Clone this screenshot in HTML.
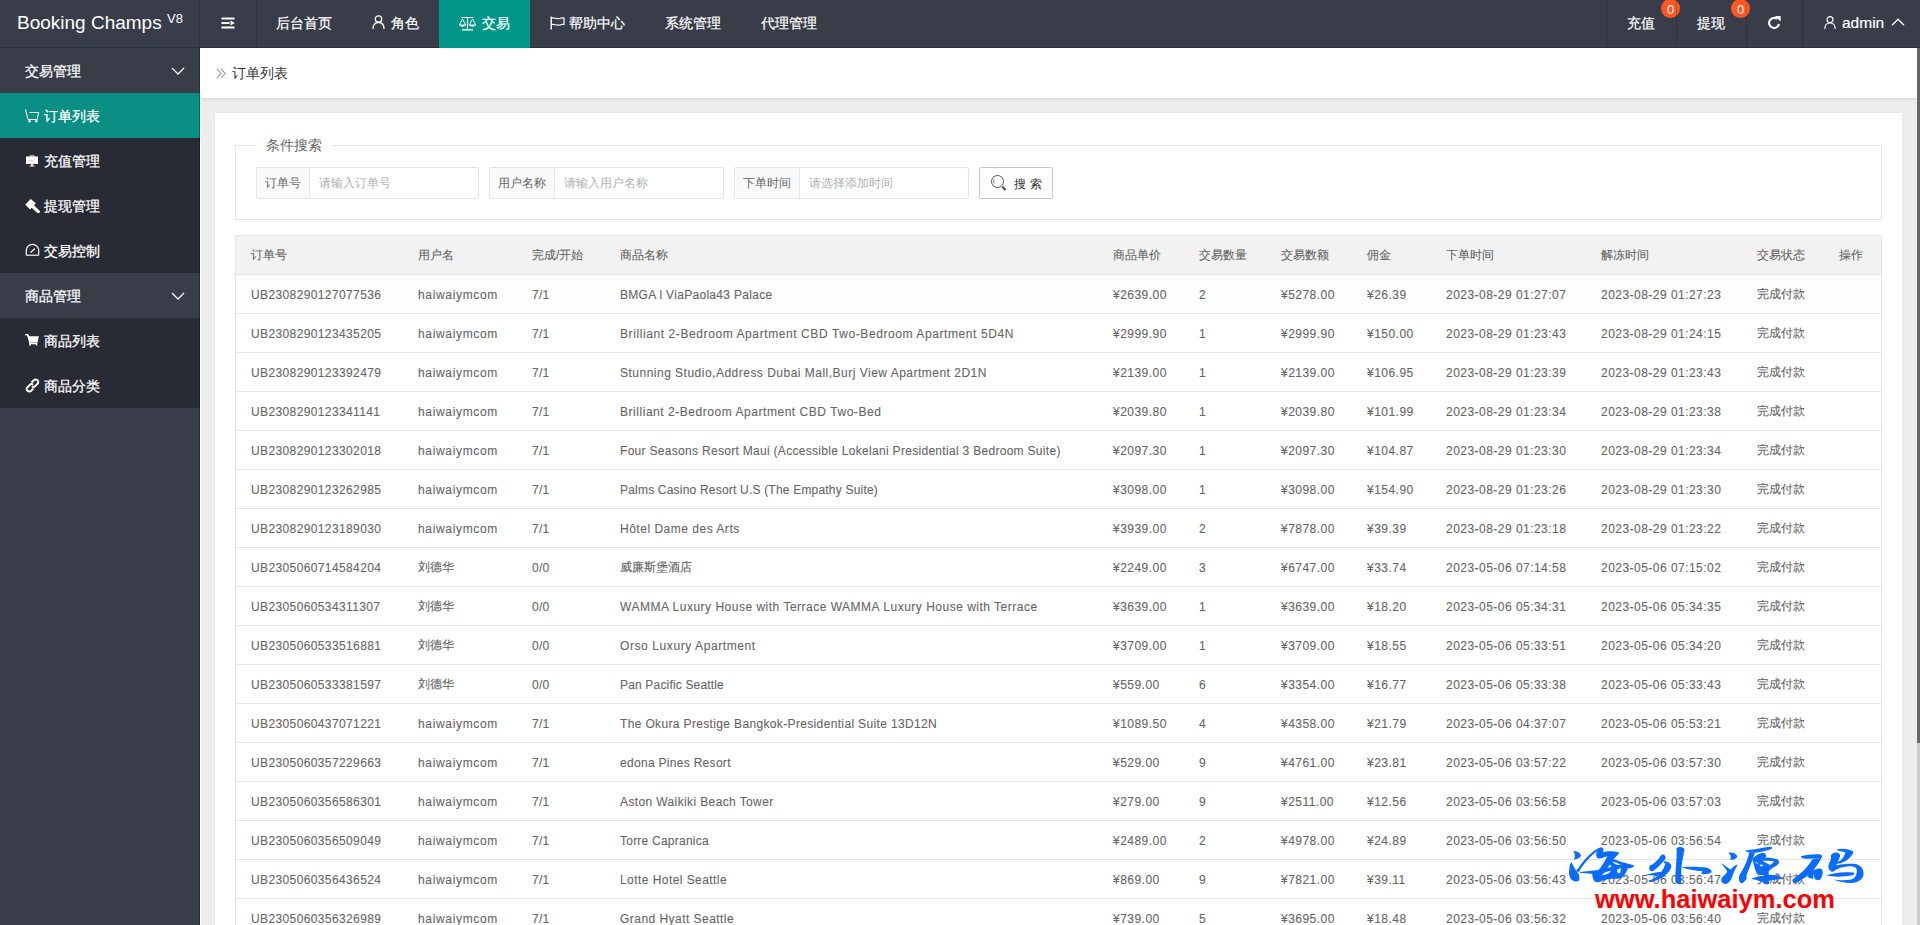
<!DOCTYPE html>
<html><head><meta charset="utf-8">
<style>
*{margin:0;padding:0;box-sizing:border-box}
html,body{width:1920px;height:925px;overflow:hidden;background:#ededed;font-family:"Liberation Sans",sans-serif;font-size:14px;color:#666}
.abs{position:absolute}
#hdr{position:absolute;left:0;top:0;width:1920px;height:48px;background:#393D49}
#hdr .t{position:absolute;color:#fff;font-size:14px;line-height:16px;top:15px;white-space:nowrap;-webkit-text-stroke:0.2px #fff}
.vd{position:absolute;top:0;width:1px;height:47px;background:rgba(0,0,0,.16);z-index:2}
#side{position:absolute;left:0;top:48px;width:200px;height:877px;background:#393D49}
.si{position:absolute;left:0;width:200px;height:45px;color:#fff;font-size:14px;line-height:45px}
.si.sub{background:#282B33}
.si.act{background:#098f83}
.si span{position:absolute;top:1px;-webkit-text-stroke:0.25px #fff}
#body{position:absolute;left:200px;top:48px;width:1717px;height:877px;background:#ededed;overflow:hidden;border-left:1px solid #fafafa}
#crumb{position:absolute;left:-1px;top:0;width:1717px;height:50px;background:#fff;box-shadow:0 1px 4px rgba(0,0,0,.12)}
#card{position:absolute;left:14px;top:65px;width:1687px;height:900px;background:#fff;box-shadow:0 0 2px rgba(0,0,0,.06)}
#fs{position:absolute;left:20px;top:32px;width:1647px;height:75px;border:1px solid #e6e6e6}
#lg{position:absolute;left:20px;top:-11px;padding:0 10px;background:#fff;color:#666;font-size:14px;line-height:20px}
.ig{position:absolute;top:21px;height:32px;border:1px solid #e6e6e6;border-radius:2px;background:#fff}
.ig .lb{position:absolute;left:0;top:0;height:30px;background:#fafafa;border-right:1px solid #e6e6e6;color:#666;font-size:12px;line-height:30px;text-align:center}
.ig .ph{position:absolute;top:0;color:#b0b0b0;font-size:12px;line-height:30px}
#btn{position:absolute;left:743px;top:21px;width:74px;height:32px;border:1px solid #c9c9c9;border-radius:2px;background:#fff}
#tbl{position:absolute;left:20px;top:122px;width:1647px;height:800px;border:1px solid #e6e6e6;border-bottom:none}
.tr{position:absolute;left:0;width:1645px;height:39px;border-bottom:1px solid #e6e6e6;background:#fff}
.tr.th{background:#f2f2f2}
.tr.r1{background:#fdfdfd}
.c{position:absolute;top:0;line-height:38px;font-size:12px;color:#666;white-space:nowrap;-webkit-text-stroke:0.1px #666}
.c.l{letter-spacing:.3px;top:1px}
#sb{position:absolute;left:1917px;top:48px;width:3px;height:877px;background:#ccc}
#sbt{position:absolute;left:1917px;top:48px;width:3px;height:695px;background:#666}
</style></head><body>
<div id="hdr">
  <div class="t" style="left:17px;top:12px;font-size:19px;line-height:22px;-webkit-text-stroke:0">Booking Champs <sup style="font-size:13px;vertical-align:0;position:relative;top:-6.5px">V8</sup></div>
  <div class="vd" style="left:199px"></div><div class="abs" style="left:0;top:47px;width:1920px;height:1px;background:#2e313b"></div>
  <div class="vd" style="left:256px"></div>
  <!-- shrink icon -->
  <svg class="abs" style="left:221px;top:17px" width="15" height="12" viewBox="0 0 15 12"><rect x="0.5" y="0.5" width="13" height="2" fill="#fff"/><rect x="0.5" y="5" width="8" height="2" fill="#fff"/><path d="M9.5 3.5 L13.8 6 L9.5 8.5Z" fill="#fff"/><rect x="0.5" y="9.5" width="13" height="2" fill="#fff"/></svg>
  <div class="t" style="left:276px">后台首页</div>
  <!-- user icon -->
  <svg class="abs" style="left:372px;top:15px" width="13" height="14" viewBox="0 0 13 14"><circle cx="6.5" cy="4" r="3.2" fill="none" stroke="#fff" stroke-width="1.3"/><path d="M1 14 C1 9.5 3.5 7.5 6.5 7.5 C9.5 7.5 12 9.5 12 14" fill="none" stroke="#fff" stroke-width="1.3"/></svg>
  <div class="t" style="left:391px">角色</div>
  <div class="abs" style="left:439px;top:0;width:91px;height:48px;background:#009688"></div>
  <!-- balance icon -->
  <svg class="abs" style="left:458px;top:16px" width="19" height="15" viewBox="0 0 19 15"><path d="M3.5 1.5 H15.5 M9.5 1 V13.5 M4 13.8 H15" stroke="#fff" stroke-width="1.2" fill="none"/><path d="M4.5 3 L1.3 9 H7.7 Z M14.5 3 L11.3 9 H17.7 Z" stroke="#fff" stroke-width="0.9" fill="none"/><path d="M1 9 Q4.5 12.5 8 9 Z M11 9 Q14.5 12.5 18 9 Z" fill="#fff"/></svg>
  <div class="t" style="left:482px">交易</div>
  <!-- flag icon -->
  <svg class="abs" style="left:550px;top:16px" width="15" height="14" viewBox="0 0 15 14"><path d="M1.2 0.5 V13.5" stroke="#fff" stroke-width="1.4"/><path d="M1.5 2 C4 1 6.5 3.5 9.5 2.5 C11 2 12.5 1.8 14 2 V8.5 C12.5 8.3 11 8.5 9.5 9 C6.5 10 4 7.5 1.5 8.5" stroke="#fff" stroke-width="1.2" fill="none"/></svg>
  <div class="t" style="left:569px">帮助中心</div>
  <div class="t" style="left:665px">系统管理</div>
  <div class="t" style="left:761px">代理管理</div>

  <div class="vd" style="left:1606px"></div>
  <div class="t" style="left:1627px">充值</div>
  <div class="abs" style="left:1661px;top:-1px;width:19px;height:19px;border-radius:10px;background:#FF5722;color:#fff;font-size:13px;line-height:22px;text-align:center">0</div>
  <div class="vd" style="left:1676px"></div>
  <div class="t" style="left:1697px">提现</div>
  <div class="abs" style="left:1731px;top:-1px;width:19px;height:19px;border-radius:10px;background:#FF5722;color:#fff;font-size:13px;line-height:22px;text-align:center">0</div>
  <div class="vd" style="left:1746px"></div>
  <!-- refresh icon -->
  <svg class="abs" style="left:1767px;top:16px" width="14" height="14" viewBox="0 0 14 14"><path d="M12 8 A5 5 0 1 1 10.2 3" stroke="#fff" stroke-width="2.1" fill="none"/><path d="M8 0 L13.6 0 L13.6 5.6 Z" fill="#fff"/></svg>
  <div class="vd" style="left:1802px"></div>
  <svg class="abs" style="left:1824px;top:16px" width="12" height="13" viewBox="0 0 12 13"><circle cx="6" cy="3.7" r="3" fill="none" stroke="#fff" stroke-width="1.2"/><path d="M0.8 13 C0.8 8.8 3 7 6 7 C9 7 11.2 8.8 11.2 13" fill="none" stroke="#fff" stroke-width="1.2"/></svg>
  <div class="t" style="left:1842px;font-size:15.5px">admin</div>
  <svg class="abs" style="left:1891px;top:18px" width="14" height="8" viewBox="0 0 14 8"><path d="M1 7.2 L7 1.2 L13 7.2" stroke="#fff" stroke-width="1.3" fill="none"/></svg>
</div>

<div id="side">
  <div class="si" style="top:0"><span style="left:25px">交易管理</span>
    <svg class="abs" style="left:171px;top:19px" width="14" height="8" viewBox="0 0 14 8"><path d="M1 1 L7 7 L13 1" stroke="#fff" stroke-width="1.3" fill="none"/></svg></div>
  <div class="si act" style="top:45px">
    <svg class="abs" style="left:25px;top:16px" width="15" height="14" viewBox="0 0 15 14"><path d="M0.5 0.5 L3 10.5 H12.2 L13.6 3.5 H4.5" stroke="#fff" stroke-width="1" fill="none"/><circle cx="4.5" cy="12.3" r="1.2" fill="#fff"/><circle cx="11.3" cy="12.3" r="1.2" fill="#fff"/></svg>
    <span style="left:44px">订单列表</span></div>
  <div class="si sub" style="top:90px">
    <svg class="abs" style="left:25px;top:17px" width="14" height="13" viewBox="0 0 14 13"><path d="M1 1.5 H13 V9 H1 Z" fill="#fff"/><rect x="4.5" y="0.3" width="5" height="1.5" fill="#ddd"/><path d="M6.2 9 H7.8 V10.5 H9.5 V11.5 H4.5 V10.5 H6.2Z" fill="#fff"/><path d="M3 6.5 L5 5.5 L7 6 L10.5 4" stroke="#e9a" stroke-width="0.6" fill="none"/></svg>
    <span style="left:44px">充值管理</span></div>
  <div class="si sub" style="top:135px">
    <svg class="abs" style="left:25px;top:15px" width="15" height="15" viewBox="0 0 15 15"><path d="M0.3 6.6 L5.7 1.1 L10.9 5.3 L5 11.4 Z" fill="#fff"/><path d="M7.5 8.3 L13.3 13.6" stroke="#fff" stroke-width="3.3" stroke-linecap="round"/></svg>
    <span style="left:44px">提现管理</span></div>
  <div class="si sub" style="top:180px">
    <svg class="abs" style="left:25px;top:15px" width="15" height="14" viewBox="0 0 15 14"><path d="M1.3 12 V7.5 A6.2 6.2 0 0 1 13.7 7.5 V12" stroke="#fff" stroke-width="1.2" fill="none"/><rect x="1" y="11.5" width="13" height="1.5" fill="#ccc"/><path d="M5.5 9.5 L10 5.5" stroke="#fff" stroke-width="1.2"/></svg>
    <span style="left:44px">交易控制</span></div>
  <div class="si" style="top:225px"><span style="left:25px">商品管理</span>
    <svg class="abs" style="left:171px;top:19px" width="14" height="8" viewBox="0 0 14 8"><path d="M1 1 L7 7 L13 1" stroke="#fff" stroke-width="1.3" fill="none"/></svg></div>
  <div class="si sub" style="top:270px">
    <svg class="abs" style="left:25px;top:16px" width="14" height="13" viewBox="0 0 14 13"><path d="M0.3 0.8 H2.8 L3.8 3 H13 L12 7.8 H4.5" stroke="#fff" stroke-width="1.4" fill="none"/><path d="M3.5 3 H12.8 L11.8 7.5 H4.5 Z" fill="#fff"/><path d="M2.8 1 L5 8.5 V11.5 M4.5 9.5 H11.5 V11.5" stroke="#fff" stroke-width="1.6" fill="none"/></svg>
    <span style="left:44px">商品列表</span></div>
  <div class="si sub" style="top:315px">
    <svg class="abs" style="left:25px;top:15px" width="15" height="15" viewBox="0 0 15 15"><path d="M6.5 4.5 L8.8 2.2 A2.3 2.3 0 0 1 12.5 5.8 L10.2 8.1 A2.3 2.3 0 0 1 7 8.3" stroke="#fff" stroke-width="2" fill="none"/><path d="M8.5 10.5 L6.2 12.8 A2.3 2.3 0 0 1 2.5 9.2 L4.8 6.9 A2.3 2.3 0 0 1 8 6.7" stroke="#fff" stroke-width="2" fill="none"/></svg>
    <span style="left:44px">商品分类</span></div>
</div>

<div class="abs" style="left:199px;top:48px;width:1px;height:877px;background:rgba(0,0,0,.28);z-index:3"></div>
<div id="body">
  <div id="crumb">
    <svg class="abs" style="left:16px;top:20px" width="11" height="11" viewBox="0 0 11 11"><path d="M0.8 0.8 L5 5.5 L0.8 10.2 M5 0.8 L9.2 5.5 L5 10.2" stroke="#999" stroke-width="1.1" fill="none"/></svg>
    <div class="abs" style="left:32px;top:17px;color:#333;font-size:14px;line-height:16px">订单列表</div>
  </div>
  <div id="card">
    <div id="fs">
      <div id="lg">条件搜索</div>
      <div class="ig" style="left:20px;width:223px"><div class="lb" style="width:53px">订单号</div><div class="ph" style="left:62px">请输入订单号</div></div>
      <div class="ig" style="left:253px;width:235px"><div class="lb" style="width:65px">用户名称</div><div class="ph" style="left:74px">请输入用户名称</div></div>
      <div class="ig" style="left:498px;width:235px"><div class="lb" style="width:65px">下单时间</div><div class="ph" style="left:74px">请选择添加时间</div></div>
      <div id="btn">
        <svg class="abs" style="left:10px;top:7px" width="17" height="17" viewBox="0 0 17 17"><circle cx="7.5" cy="6.5" r="6" stroke="#555" stroke-width="1" fill="none"/><path d="M4.3 4.5 A3.5 3.5 0 0 0 4.3 8.5" stroke="#666" stroke-width="0.9" fill="none"/><path d="M12.2 11.6 L15.6 15" stroke="#555" stroke-width="2.2"/></svg>
        <div class="abs" style="left:34px;top:1px;line-height:30px;font-size:12px;color:#333;letter-spacing:4px">搜索</div>
      </div>
    </div>
    <div id="tbl">
<div class="tr th" style="top:0"><span class="c h" style="left:15px">订单号</span><span class="c h" style="left:182px">用户名</span><span class="c h" style="left:296px">完成/开始</span><span class="c h" style="left:384px">商品名称</span><span class="c h" style="left:877px">商品单价</span><span class="c h" style="left:963px">交易数量</span><span class="c h" style="left:1045px">交易数额</span><span class="c h" style="left:1131px">佣金</span><span class="c h" style="left:1210px">下单时间</span><span class="c h" style="left:1365px">解冻时间</span><span class="c h" style="left:1521px">交易状态</span><span class="c h" style="left:1603px">操作</span></div>
<div class="tr r1" style="top:39px"><span class="c l" style="left:15px;letter-spacing:0.38px">UB2308290127077536</span><span class="c l" style="left:182px;letter-spacing:0.66px">haiwaiymcom</span><span class="c l" style="left:296px;letter-spacing:0.30px">7/1</span><span class="c l" style="left:384px;letter-spacing:0.30px">BMGA l ViaPaola43 Palace</span><span class="c l" style="left:877px;letter-spacing:0.47px">¥2639.00</span><span class="c l" style="left:963px;letter-spacing:0.30px">2</span><span class="c l" style="left:1045px;letter-spacing:0.47px">¥5278.00</span><span class="c l" style="left:1131px;letter-spacing:0.47px">¥26.39</span><span class="c l" style="left:1210px;letter-spacing:0.47px">2023-08-29 01:27:07</span><span class="c l" style="left:1365px;letter-spacing:0.47px">2023-08-29 01:27:23</span><span class="c z" style="left:1521px">完成付款</span></div>
<div class="tr" style="top:78px"><span class="c l" style="left:15px;letter-spacing:0.38px">UB2308290123435205</span><span class="c l" style="left:182px;letter-spacing:0.66px">haiwaiymcom</span><span class="c l" style="left:296px;letter-spacing:0.30px">7/1</span><span class="c l" style="left:384px;letter-spacing:0.59px">Brilliant 2-Bedroom Apartment CBD Two-Bedroom Apartment 5D4N</span><span class="c l" style="left:877px;letter-spacing:0.47px">¥2999.90</span><span class="c l" style="left:963px;letter-spacing:0.30px">1</span><span class="c l" style="left:1045px;letter-spacing:0.47px">¥2999.90</span><span class="c l" style="left:1131px;letter-spacing:0.47px">¥150.00</span><span class="c l" style="left:1210px;letter-spacing:0.47px">2023-08-29 01:23:43</span><span class="c l" style="left:1365px;letter-spacing:0.47px">2023-08-29 01:24:15</span><span class="c z" style="left:1521px">完成付款</span></div>
<div class="tr" style="top:117px"><span class="c l" style="left:15px;letter-spacing:0.38px">UB2308290123392479</span><span class="c l" style="left:182px;letter-spacing:0.66px">haiwaiymcom</span><span class="c l" style="left:296px;letter-spacing:0.30px">7/1</span><span class="c l" style="left:384px;letter-spacing:0.49px">Stunning Studio,Address Dubai Mall,Burj View Apartment 2D1N</span><span class="c l" style="left:877px;letter-spacing:0.47px">¥2139.00</span><span class="c l" style="left:963px;letter-spacing:0.30px">1</span><span class="c l" style="left:1045px;letter-spacing:0.47px">¥2139.00</span><span class="c l" style="left:1131px;letter-spacing:0.47px">¥106.95</span><span class="c l" style="left:1210px;letter-spacing:0.47px">2023-08-29 01:23:39</span><span class="c l" style="left:1365px;letter-spacing:0.47px">2023-08-29 01:23:43</span><span class="c z" style="left:1521px">完成付款</span></div>
<div class="tr" style="top:156px"><span class="c l" style="left:15px;letter-spacing:0.38px">UB2308290123341141</span><span class="c l" style="left:182px;letter-spacing:0.66px">haiwaiymcom</span><span class="c l" style="left:296px;letter-spacing:0.30px">7/1</span><span class="c l" style="left:384px;letter-spacing:0.54px">Brilliant 2-Bedroom Apartment CBD Two-Bed</span><span class="c l" style="left:877px;letter-spacing:0.47px">¥2039.80</span><span class="c l" style="left:963px;letter-spacing:0.30px">1</span><span class="c l" style="left:1045px;letter-spacing:0.47px">¥2039.80</span><span class="c l" style="left:1131px;letter-spacing:0.47px">¥101.99</span><span class="c l" style="left:1210px;letter-spacing:0.47px">2023-08-29 01:23:34</span><span class="c l" style="left:1365px;letter-spacing:0.47px">2023-08-29 01:23:38</span><span class="c z" style="left:1521px">完成付款</span></div>
<div class="tr" style="top:195px"><span class="c l" style="left:15px;letter-spacing:0.38px">UB2308290123302018</span><span class="c l" style="left:182px;letter-spacing:0.66px">haiwaiymcom</span><span class="c l" style="left:296px;letter-spacing:0.30px">7/1</span><span class="c l" style="left:384px;letter-spacing:0.30px">Four Seasons Resort Maui (Accessible Lokelani Presidential 3 Bedroom Suite)</span><span class="c l" style="left:877px;letter-spacing:0.47px">¥2097.30</span><span class="c l" style="left:963px;letter-spacing:0.30px">1</span><span class="c l" style="left:1045px;letter-spacing:0.47px">¥2097.30</span><span class="c l" style="left:1131px;letter-spacing:0.47px">¥104.87</span><span class="c l" style="left:1210px;letter-spacing:0.47px">2023-08-29 01:23:30</span><span class="c l" style="left:1365px;letter-spacing:0.47px">2023-08-29 01:23:34</span><span class="c z" style="left:1521px">完成付款</span></div>
<div class="tr" style="top:234px"><span class="c l" style="left:15px;letter-spacing:0.38px">UB2308290123262985</span><span class="c l" style="left:182px;letter-spacing:0.66px">haiwaiymcom</span><span class="c l" style="left:296px;letter-spacing:0.30px">7/1</span><span class="c l" style="left:384px;letter-spacing:0.20px">Palms Casino Resort U.S (The Empathy Suite)</span><span class="c l" style="left:877px;letter-spacing:0.47px">¥3098.00</span><span class="c l" style="left:963px;letter-spacing:0.30px">1</span><span class="c l" style="left:1045px;letter-spacing:0.47px">¥3098.00</span><span class="c l" style="left:1131px;letter-spacing:0.47px">¥154.90</span><span class="c l" style="left:1210px;letter-spacing:0.47px">2023-08-29 01:23:26</span><span class="c l" style="left:1365px;letter-spacing:0.47px">2023-08-29 01:23:30</span><span class="c z" style="left:1521px">完成付款</span></div>
<div class="tr" style="top:273px"><span class="c l" style="left:15px;letter-spacing:0.38px">UB2308290123189030</span><span class="c l" style="left:182px;letter-spacing:0.66px">haiwaiymcom</span><span class="c l" style="left:296px;letter-spacing:0.30px">7/1</span><span class="c l" style="left:384px;letter-spacing:0.51px">Hôtel Dame des Arts</span><span class="c l" style="left:877px;letter-spacing:0.47px">¥3939.00</span><span class="c l" style="left:963px;letter-spacing:0.30px">2</span><span class="c l" style="left:1045px;letter-spacing:0.47px">¥7878.00</span><span class="c l" style="left:1131px;letter-spacing:0.47px">¥39.39</span><span class="c l" style="left:1210px;letter-spacing:0.47px">2023-08-29 01:23:18</span><span class="c l" style="left:1365px;letter-spacing:0.47px">2023-08-29 01:23:22</span><span class="c z" style="left:1521px">完成付款</span></div>
<div class="tr" style="top:312px"><span class="c l" style="left:15px;letter-spacing:0.38px">UB2305060714584204</span><span class="c z" style="left:182px">刘德华</span><span class="c l" style="left:296px;letter-spacing:0.30px">0/0</span><span class="c z" style="left:384px">威廉斯堡酒店</span><span class="c l" style="left:877px;letter-spacing:0.47px">¥2249.00</span><span class="c l" style="left:963px;letter-spacing:0.30px">3</span><span class="c l" style="left:1045px;letter-spacing:0.47px">¥6747.00</span><span class="c l" style="left:1131px;letter-spacing:0.47px">¥33.74</span><span class="c l" style="left:1210px;letter-spacing:0.47px">2023-05-06 07:14:58</span><span class="c l" style="left:1365px;letter-spacing:0.47px">2023-05-06 07:15:02</span><span class="c z" style="left:1521px">完成付款</span></div>
<div class="tr" style="top:351px"><span class="c l" style="left:15px;letter-spacing:0.38px">UB2305060534311307</span><span class="c z" style="left:182px">刘德华</span><span class="c l" style="left:296px;letter-spacing:0.30px">0/0</span><span class="c l" style="left:384px;letter-spacing:0.50px">WAMMA Luxury House with Terrace WAMMA Luxury House with Terrace</span><span class="c l" style="left:877px;letter-spacing:0.47px">¥3639.00</span><span class="c l" style="left:963px;letter-spacing:0.30px">1</span><span class="c l" style="left:1045px;letter-spacing:0.47px">¥3639.00</span><span class="c l" style="left:1131px;letter-spacing:0.47px">¥18.20</span><span class="c l" style="left:1210px;letter-spacing:0.47px">2023-05-06 05:34:31</span><span class="c l" style="left:1365px;letter-spacing:0.47px">2023-05-06 05:34:35</span><span class="c z" style="left:1521px">完成付款</span></div>
<div class="tr" style="top:390px"><span class="c l" style="left:15px;letter-spacing:0.38px">UB2305060533516881</span><span class="c z" style="left:182px">刘德华</span><span class="c l" style="left:296px;letter-spacing:0.30px">0/0</span><span class="c l" style="left:384px;letter-spacing:0.59px">Orso Luxury Apartment</span><span class="c l" style="left:877px;letter-spacing:0.47px">¥3709.00</span><span class="c l" style="left:963px;letter-spacing:0.30px">1</span><span class="c l" style="left:1045px;letter-spacing:0.47px">¥3709.00</span><span class="c l" style="left:1131px;letter-spacing:0.47px">¥18.55</span><span class="c l" style="left:1210px;letter-spacing:0.47px">2023-05-06 05:33:51</span><span class="c l" style="left:1365px;letter-spacing:0.47px">2023-05-06 05:34:20</span><span class="c z" style="left:1521px">完成付款</span></div>
<div class="tr" style="top:429px"><span class="c l" style="left:15px;letter-spacing:0.38px">UB2305060533381597</span><span class="c z" style="left:182px">刘德华</span><span class="c l" style="left:296px;letter-spacing:0.30px">0/0</span><span class="c l" style="left:384px;letter-spacing:0.17px">Pan Pacific Seattle</span><span class="c l" style="left:877px;letter-spacing:0.47px">¥559.00</span><span class="c l" style="left:963px;letter-spacing:0.30px">6</span><span class="c l" style="left:1045px;letter-spacing:0.47px">¥3354.00</span><span class="c l" style="left:1131px;letter-spacing:0.47px">¥16.77</span><span class="c l" style="left:1210px;letter-spacing:0.47px">2023-05-06 05:33:38</span><span class="c l" style="left:1365px;letter-spacing:0.47px">2023-05-06 05:33:43</span><span class="c z" style="left:1521px">完成付款</span></div>
<div class="tr" style="top:468px"><span class="c l" style="left:15px;letter-spacing:0.38px">UB2305060437071221</span><span class="c l" style="left:182px;letter-spacing:0.66px">haiwaiymcom</span><span class="c l" style="left:296px;letter-spacing:0.30px">7/1</span><span class="c l" style="left:384px;letter-spacing:0.35px">The Okura Prestige Bangkok-Presidential Suite 13D12N</span><span class="c l" style="left:877px;letter-spacing:0.47px">¥1089.50</span><span class="c l" style="left:963px;letter-spacing:0.30px">4</span><span class="c l" style="left:1045px;letter-spacing:0.47px">¥4358.00</span><span class="c l" style="left:1131px;letter-spacing:0.47px">¥21.79</span><span class="c l" style="left:1210px;letter-spacing:0.47px">2023-05-06 04:37:07</span><span class="c l" style="left:1365px;letter-spacing:0.47px">2023-05-06 05:53:21</span><span class="c z" style="left:1521px">完成付款</span></div>
<div class="tr" style="top:507px"><span class="c l" style="left:15px;letter-spacing:0.38px">UB2305060357229663</span><span class="c l" style="left:182px;letter-spacing:0.66px">haiwaiymcom</span><span class="c l" style="left:296px;letter-spacing:0.30px">7/1</span><span class="c l" style="left:384px;letter-spacing:0.30px">edona Pines Resort</span><span class="c l" style="left:877px;letter-spacing:0.47px">¥529.00</span><span class="c l" style="left:963px;letter-spacing:0.30px">9</span><span class="c l" style="left:1045px;letter-spacing:0.47px">¥4761.00</span><span class="c l" style="left:1131px;letter-spacing:0.47px">¥23.81</span><span class="c l" style="left:1210px;letter-spacing:0.47px">2023-05-06 03:57:22</span><span class="c l" style="left:1365px;letter-spacing:0.47px">2023-05-06 03:57:30</span><span class="c z" style="left:1521px">完成付款</span></div>
<div class="tr" style="top:546px"><span class="c l" style="left:15px;letter-spacing:0.38px">UB2305060356586301</span><span class="c l" style="left:182px;letter-spacing:0.66px">haiwaiymcom</span><span class="c l" style="left:296px;letter-spacing:0.30px">7/1</span><span class="c l" style="left:384px;letter-spacing:0.38px">Aston Waikiki Beach Tower</span><span class="c l" style="left:877px;letter-spacing:0.47px">¥279.00</span><span class="c l" style="left:963px;letter-spacing:0.30px">9</span><span class="c l" style="left:1045px;letter-spacing:0.47px">¥2511.00</span><span class="c l" style="left:1131px;letter-spacing:0.47px">¥12.56</span><span class="c l" style="left:1210px;letter-spacing:0.47px">2023-05-06 03:56:58</span><span class="c l" style="left:1365px;letter-spacing:0.47px">2023-05-06 03:57:03</span><span class="c z" style="left:1521px">完成付款</span></div>
<div class="tr" style="top:585px"><span class="c l" style="left:15px;letter-spacing:0.38px">UB2305060356509049</span><span class="c l" style="left:182px;letter-spacing:0.66px">haiwaiymcom</span><span class="c l" style="left:296px;letter-spacing:0.30px">7/1</span><span class="c l" style="left:384px;letter-spacing:0.23px">Torre Capranica</span><span class="c l" style="left:877px;letter-spacing:0.47px">¥2489.00</span><span class="c l" style="left:963px;letter-spacing:0.30px">2</span><span class="c l" style="left:1045px;letter-spacing:0.47px">¥4978.00</span><span class="c l" style="left:1131px;letter-spacing:0.47px">¥24.89</span><span class="c l" style="left:1210px;letter-spacing:0.47px">2023-05-06 03:56:50</span><span class="c l" style="left:1365px;letter-spacing:0.47px">2023-05-06 03:56:54</span><span class="c z" style="left:1521px">完成付款</span></div>
<div class="tr" style="top:624px"><span class="c l" style="left:15px;letter-spacing:0.38px">UB2305060356436524</span><span class="c l" style="left:182px;letter-spacing:0.66px">haiwaiymcom</span><span class="c l" style="left:296px;letter-spacing:0.30px">7/1</span><span class="c l" style="left:384px;letter-spacing:0.44px">Lotte Hotel Seattle</span><span class="c l" style="left:877px;letter-spacing:0.47px">¥869.00</span><span class="c l" style="left:963px;letter-spacing:0.30px">9</span><span class="c l" style="left:1045px;letter-spacing:0.47px">¥7821.00</span><span class="c l" style="left:1131px;letter-spacing:0.47px">¥39.11</span><span class="c l" style="left:1210px;letter-spacing:0.47px">2023-05-06 03:56:43</span><span class="c l" style="left:1365px;letter-spacing:0.47px">2023-05-06 03:56:47</span><span class="c z" style="left:1521px">完成付款</span></div>
<div class="tr" style="top:663px"><span class="c l" style="left:15px;letter-spacing:0.38px">UB2305060356326989</span><span class="c l" style="left:182px;letter-spacing:0.66px">haiwaiymcom</span><span class="c l" style="left:296px;letter-spacing:0.30px">7/1</span><span class="c l" style="left:384px;letter-spacing:0.46px">Grand Hyatt Seattle</span><span class="c l" style="left:877px;letter-spacing:0.47px">¥739.00</span><span class="c l" style="left:963px;letter-spacing:0.30px">5</span><span class="c l" style="left:1045px;letter-spacing:0.47px">¥3695.00</span><span class="c l" style="left:1131px;letter-spacing:0.47px">¥18.48</span><span class="c l" style="left:1210px;letter-spacing:0.47px">2023-05-06 03:56:32</span><span class="c l" style="left:1365px;letter-spacing:0.47px">2023-05-06 03:56:40</span><span class="c z" style="left:1521px">完成付款</span></div>
    </div>
  </div>
</div>

<div id="wm">
<svg class="abs" style="left:1565px;top:844px" width="75" height="42" viewBox="0 0 1652 925"><g fill="#0a6cff">
<path d="M180,160 C260,150 340,190 350,250 C350,300 290,330 190,345 C230,290 230,220 180,160 Z"/>
<path d="M140,395 L250,600 C300,640 320,700 320,770 C310,820 260,840 200,820 C120,790 80,700 90,600 C95,500 110,430 140,395 Z"/>
<path d="M240,600 C380,400 560,160 760,80 L800,110 C600,200 420,420 300,620 Z"/>
<path d="M690,250 C680,170 740,100 780,70 C830,70 860,110 840,180 C900,160 1050,140 1200,190 C1150,250 1100,300 1060,340 L940,270 C880,280 800,330 740,320 C700,310 690,280 690,250 Z"/>
<path d="M940,260 L1060,330 C1150,360 1250,400 1330,420 C1420,440 1500,460 1530,490 C1500,520 1440,530 1380,540 C1360,600 1330,680 1230,760 C1100,770 1000,760 900,780 C820,800 760,850 700,840 C640,830 610,780 600,660 C500,640 400,650 330,640 L340,615 C450,600 600,590 740,570 C780,520 820,470 850,420 Z"/>
<path fill="#fff" d="M930,520 L1000,450 L1020,510 Z M810,690 C860,620 950,600 1010,590 C990,650 900,680 810,690 Z M1150,560 L1230,530 L1220,620 C1200,660 1160,650 1150,600 Z M1040,385 C1120,400 1200,430 1220,460 C1150,470 1080,440 1040,385 Z"/>
</g></svg>
<svg class="abs" style="left:1640px;top:844px" width="75" height="42" viewBox="0 0 1652 925"><g fill="#0a6cff">
<path d="M470,240 C520,210 580,250 560,330 C480,420 380,540 280,600 C220,610 190,560 210,480 C300,440 400,360 470,240 Z"/>
<path d="M520,380 C600,380 700,420 690,500 C660,620 520,760 240,840 C200,830 180,810 220,800 C400,730 500,620 560,430 C540,420 510,420 520,380 Z"/>
<path d="M120,680 C250,640 400,610 500,610 L480,690 C380,690 250,700 120,680 Z"/>
<path d="M800,100 C860,50 960,60 980,120 C960,250 920,400 910,560 C905,700 920,800 900,880 C860,900 800,870 780,820 C770,700 800,500 810,150 Z"/>
<path d="M920,510 C1100,490 1300,500 1450,520 C1550,550 1600,590 1570,630 C1520,660 1430,670 1360,660 C1350,640 1360,610 1380,600 C1200,580 1050,560 920,510 Z"/>
</g></svg>
<svg class="abs" style="left:1715px;top:844px" width="75" height="42" viewBox="0 0 1652 925"><g fill="#0a6cff">
<path d="M290,190 C380,170 470,210 490,270 C480,330 410,350 330,350 C360,300 360,240 290,190 Z"/>
<path d="M130,420 C200,460 280,530 340,560 C400,500 450,460 500,450 C440,560 400,640 380,720 C350,800 300,870 230,880 C160,880 130,820 140,770 C160,700 240,680 270,610 C240,540 170,480 130,420 Z"/>
<path d="M660,140 C800,130 1000,90 1200,60 C1260,60 1270,90 1240,110 C1150,150 1000,180 880,190 C780,200 700,190 660,140 Z"/>
<path d="M760,180 L880,190 C840,300 800,420 760,520 C710,640 680,720 700,760 C650,830 600,880 560,860 C520,820 520,740 540,680 C620,560 700,400 760,180 Z"/>
<path d="M820,330 C900,240 1000,180 1080,200 C1130,220 1140,270 1110,300 C1200,300 1300,320 1380,340 C1430,380 1420,440 1330,490 C1250,530 1180,590 1150,650 L1060,680 C1000,690 940,670 920,650 L880,550 C860,470 840,400 820,330 Z"/>
<path fill="#fff" d="M870,410 L960,440 L920,400 Z M980,450 L1080,460 L1010,500 Z M1040,370 C1150,370 1250,370 1300,380 C1280,420 1240,440 1220,460 L1170,440 Z"/>
<path d="M800,760 C950,720 1100,680 1250,680 C1350,690 1450,720 1500,760 C1400,780 1300,790 1190,810 L1180,880 C1100,880 1000,820 900,790 C850,780 810,780 800,760 Z"/>
<path d="M1060,580 L1180,570 L1190,870 L1100,880 Z"/>
</g></svg>
<svg class="abs" style="left:1790px;top:844px" width="75" height="42" viewBox="0 0 1652 925"><g fill="#0a6cff">
<path d="M240,270 C350,240 500,220 680,230 C720,250 710,300 680,320 C550,320 400,330 300,320 C260,310 240,290 240,270 Z"/>
<path d="M500,330 L690,310 C640,420 560,520 520,570 C420,680 250,800 120,860 C60,850 40,800 60,780 C250,650 400,500 500,330 Z"/>
<path d="M530,570 C600,540 680,520 700,560 C740,620 720,700 660,790 C620,810 570,790 540,760 L520,650 Z"/>
<path d="M430,600 L560,560 L560,700 L520,660 L510,770 L380,730 Z"/>
<path d="M1020,120 C1150,90 1300,110 1390,160 C1400,210 1350,280 1260,350 C1200,390 1140,420 1060,430 C1020,440 1000,460 1040,470 C1150,440 1300,430 1450,440 C1580,470 1630,580 1620,680 C1600,780 1500,860 1350,860 C1200,860 1080,830 960,790 C1100,800 1250,800 1350,780 C1450,750 1480,650 1470,560 C1450,500 1380,490 1300,490 L1150,510 C1050,540 980,580 950,610 C880,610 830,540 850,460 C870,380 920,340 900,280 C900,220 960,180 1040,190 C1100,200 1120,250 1090,300 C1080,340 1060,380 1060,390 C1120,370 1180,320 1220,180 C1150,170 1070,150 1020,120 Z"/>
<path d="M800,690 C950,640 1150,600 1400,630 C1430,650 1420,680 1380,690 C1200,720 1000,740 800,690 Z"/>
</g></svg>
<div class="abs" style="left:1595px;top:884px;font-family:'Liberation Sans',sans-serif;font-weight:bold;font-size:25.5px;line-height:30px;color:#f00;white-space:nowrap">www.haiwaiym.com</div>
</div>
<div id="sb"></div><div id="sbt"></div>
</body></html>
